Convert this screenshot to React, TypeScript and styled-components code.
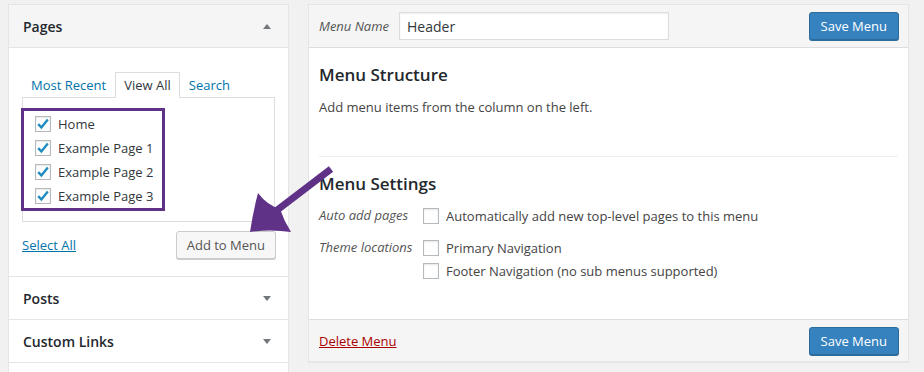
import React from 'react';
import styled, { createGlobalStyle } from 'styled-components';

const GlobalStyle = createGlobalStyle`
  html, body {
    margin: 0;
    padding: 0;
    background: #f1f1f1;
  }
  body {
    font-family: 'Open Sans', 'Liberation Sans', sans-serif;
    font-size: 13px;
    color: #444;
  }
  * { box-sizing: border-box; }
`;

const Page = styled.div`
  position: relative;
  display: flex;
  align-items: flex-start;
  gap: 19px;
  padding: 4px 0 0 8px;
  height: 372px;
  overflow: hidden;
`;

const SideColumn = styled.div`
  width: 281px;
  flex-shrink: 0;
  border: 1px solid #e5e5e5;
  background: #fff;
`;

const Section = styled.section`
  border-top: 1px solid #e5e5e5;
  &:first-child { border-top: none; }
`;

const SectionHeader = styled.div<{ $open?: boolean }>`
  height: ${(p) => (p.$open ? 43 : 42)}px;
  display: flex;
  align-items: center;
  justify-content: space-between;
  padding: 0 17px 0 14px;
  background: ${(p) => (p.$open ? '#f5f5f5' : '#fff')};
  border-bottom: ${(p) => (p.$open ? '1px solid #e5e5e5' : 'none')};
  h3 {
    margin: 0;
    font-size: 14px;
    font-weight: 600;
    color: #23282d;
  }
`;

const Caret = styled.span<{ $up?: boolean }>`
  width: 0;
  height: 0;
  border-left: 4px solid transparent;
  border-right: 4px solid transparent;
  ${(p) => (p.$up ? 'border-bottom: 5px solid #72777c;' : 'border-top: 5px solid #72777c;')}
`;

const SectionBody = styled.div`
  padding: 24px 13px 17px 13px;
`;

const Tabs = styled.ul`
  display: flex;
  list-style: none;
  margin: 0;
  padding: 0;
`;

const Tab = styled.li<{ $active?: boolean }>`
  position: relative;
  z-index: 1;
  padding: 3px 8px;
  line-height: 19px;
  margin-bottom: -1px;
  border: 1px solid ${(p) => (p.$active ? '#ddd' : 'transparent')};
  border-bottom: none;
  background: ${(p) => (p.$active ? '#fff' : 'transparent')};
  color: ${(p) => (p.$active ? '#32373c' : '#0073aa')};
  height: 26px;
`;

const TabPanel = styled.div`
  border: 1px solid #ddd;
  padding: 10px 0 10px 0;
  background: #fff;
`;

const Highlight = styled.ul`
  list-style: none;
  margin: 0 0 0 -2px;
  padding: 1px 0 0 11px;
  width: 144px;
  border: 3px solid #5f3287;
`;

const CheckRow = styled.li`
  display: flex;
  align-items: center;
  gap: 7px;
  height: 24px;
  color: #32373c;
`;

const Box = styled.span`
  width: 16px;
  height: 16px;
  flex-shrink: 0;
  display: inline-flex;
  align-items: center;
  justify-content: center;
  border: 1px solid #b4b9be;
  background: #fff;
  box-shadow: inset 0 1px 2px rgba(0, 0, 0, 0.1);
`;

const Actions = styled.div`
  display: flex;
  align-items: center;
  justify-content: space-between;
  margin-top: 9px;
  margin-right: -1px;
`;

const LinkText = styled.a<{ $danger?: boolean }>`
  color: ${(p) => (p.$danger ? '#a00' : '#0073aa')};
  text-decoration: underline;
  cursor: pointer;
`;

const Button = styled.button<{ $primary?: boolean }>`
  height: 28px;
  padding: 0 ${(p) => (p.$primary ? 11 : 10)}px;
  font-family: inherit;
  font-size: 13px;
  line-height: 26px;
  border-radius: 3px;
  border: 1px solid ${(p) => (p.$primary ? '#2c6c9c' : '#ccc')};
  background: ${(p) => (p.$primary ? '#3682be' : '#f7f7f7')};
  color: ${(p) => (p.$primary ? '#fff' : '#555')};
  box-shadow: 0 1px 0 ${(p) => (p.$primary ? '#2c6c9c' : '#ccc')};
`;

const MainPanel = styled.div`
  width: 601px;
  flex-shrink: 0;
  border: 1px solid #e5e5e5;
  background: #fff;
  box-shadow: 0 1px 1px rgba(0, 0, 0, 0.04);
`;

const Bar = styled.div<{ $bottom?: boolean }>`
  height: ${(p) => (p.$bottom ? 42 : 43)}px;
  display: flex;
  align-items: center;
  justify-content: space-between;
  padding: 0 9px 0 10px;
  background: #f5f5f5;
  ${(p) => (p.$bottom ? 'border-top: 1px solid #ddd;' : 'border-bottom: 1px solid #ddd;')}
`;

const NameField = styled.label`
  display: flex;
  align-items: center;
  gap: 10px;
  font-style: italic;
  color: #555;
`;

const TextInput = styled.input`
  width: 270px;
  height: 28px;
  border: 1px solid #ddd;
  box-shadow: inset 0 1px 2px rgba(0, 0, 0, 0.07);
  padding: 0 7px;
  font-family: inherit;
  font-size: 14px;
  color: #32373c;
`;

const Body = styled.div`
  padding: 15px 10px 0 10px;
  height: 271px;
`;

const Heading = styled.h3`
  margin: 0;
  font-size: 17px;
  line-height: 24px;
  font-weight: 600;
  color: #23282d;
`;

const Description = styled.p`
  margin: 10px 0 0 0;
  line-height: 20px;
  color: #444;
`;

const Divider = styled.hr`
  margin: 39px 0 15px 0;
  border: none;
  border-top: 1px solid #eee;
`;

const Settings = styled.div`
  display: grid;
  grid-template-columns: 104px 1fr;
  row-gap: 9px;
  margin-top: 8px;
`;

const SettingLabel = styled.span`
  font-style: italic;
  color: #555;
  line-height: 23px;
`;

const Options = styled.div`
  display: flex;
  flex-direction: column;
`;

const Option = styled.label`
  display: flex;
  align-items: center;
  gap: 7px;
  height: 23px;
  color: #444;
`;

const Spacer = styled.div`
  height: 20px;
`;

const ArrowLayer = styled.svg`
  position: absolute;
  left: 240px;
  top: 160px;
  pointer-events: none;
`;

function Check() {
  return (
    <svg width="14" height="14" viewBox="0 0 14 14">
      <path d="M2.2 7.2 L5.4 10.4 L11.8 2.6" fill="none" stroke="#1e8cbe" strokeWidth="2.4" strokeLinejoin="miter" />
    </svg>
  );
}

const pages = ['Home', 'Example Page 1', 'Example Page 2', 'Example Page 3'];

export default function App() {
  return (
    <>
      <GlobalStyle />
      <Page>
        <SideColumn>
          <Section>
            <SectionHeader $open>
              <h3>Pages</h3>
              <Caret $up />
            </SectionHeader>
            <SectionBody>
              <Tabs>
                <Tab>Most Recent</Tab>
                <Tab $active>View All</Tab>
                <Tab>Search</Tab>
              </Tabs>
              <TabPanel>
                <Highlight>
                  {pages.map((p) => (
                    <CheckRow key={p}>
                      <Box><Check /></Box>
                      {p}
                    </CheckRow>
                  ))}
                </Highlight>
              </TabPanel>
              <Actions>
                <LinkText>Select All</LinkText>
                <Button>Add to Menu</Button>
              </Actions>
            </SectionBody>
          </Section>
          <Section>
            <SectionHeader>
              <h3>Posts</h3>
              <Caret />
            </SectionHeader>
          </Section>
          <Section>
            <SectionHeader>
              <h3>Custom Links</h3>
              <Caret />
            </SectionHeader>
          </Section>
          <Section>
            <Spacer />
          </Section>
        </SideColumn>

        <MainPanel>
          <Bar>
            <NameField>
              Menu Name
              <TextInput defaultValue="Header" />
            </NameField>
            <Button $primary>Save Menu</Button>
          </Bar>
          <Body>
            <Heading>Menu Structure</Heading>
            <Description>Add menu items from the column on the left.</Description>
            <Divider />
            <Heading>Menu Settings</Heading>
            <Settings>
              <SettingLabel>Auto add pages</SettingLabel>
              <Options>
                <Option><Box />Automatically add new top-level pages to this menu</Option>
              </Options>
              <SettingLabel>Theme locations</SettingLabel>
              <Options>
                <Option><Box />Primary Navigation</Option>
                <Option><Box />Footer Navigation (no sub menus supported)</Option>
              </Options>
            </Settings>
          </Body>
          <Bar $bottom>
            <LinkText $danger>Delete Menu</LinkText>
            <Button $primary>Save Menu</Button>
          </Bar>
        </MainPanel>

        <ArrowLayer width="100" height="80" viewBox="0 0 100 80">
          <line x1="91" y1="9" x2="32" y2="54" stroke="#5f3287" strokeWidth="7" />
          <path d="M10 72 Q13 52 18 33 Q27 45 40 49 Q44 61 51 72 Q30 69 10 72 Z" fill="#5f3287" />
        </ArrowLayer>
      </Page>
    </>
  );
}
